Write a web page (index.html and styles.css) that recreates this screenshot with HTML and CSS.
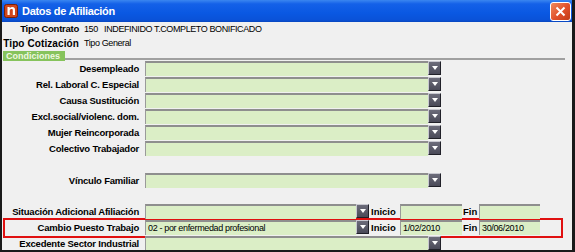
FILE: index.html
```html
<!DOCTYPE html>
<html lang="es">
<head>
<meta charset="utf-8">
<link rel="stylesheet" href="styles.css">
</head>
<body>
<div class="window">
  <div class="titlebar">
    <svg class="appicon" width="14" height="14" viewBox="0 0 14 14"><rect x="0.5" y="0.5" width="13" height="13" rx="2" fill="#d0461c" stroke="#7a2008"/><path d="M3.5 3h2.2v1.2C6.4 3.4 7.3 3 8.4 3c1.7 0 2.6 1 2.6 2.8V11H8.8V6.3c0-.9-.4-1.4-1.2-1.4-.9 0-1.9.6-1.9 1.8V11H3.5z" fill="#fff"/></svg>
    <span class="title">Datos de Afiliación</span>
    <span class="close"><svg width="11" height="11" viewBox="0 0 11 11"><path d="M1.5 1.5l8 8M9.5 1.5l-8 8" stroke="#fff" stroke-width="2"/></svg></span>
  </div>
  <div class="content">
    <div class="info first"><span class="ilabel">Tipo Contrato</span><span class="ivalue">150&nbsp;&nbsp; INDEFINIDO T.COMPLETO BONIFICADO</span></div>
    <div class="info second"><span class="ilabel wide-label">Tipo Cotización</span><span class="ivalue">Tipo General</span></div>
    <div class="tabrow"><span class="tab">Condiciones</span><span class="tabline"></span></div>

    <div class="row"><span class="label">Desempleado</span><span class="field wide"></span><span class="btn"></span></div>
    <div class="row"><span class="label">Rel. Laboral C. Especial</span><span class="field wide"></span><span class="btn"></span></div>
    <div class="row"><span class="label">Causa Sustitución</span><span class="field wide"></span><span class="btn"></span></div>
    <div class="row"><span class="label">Excl.social/violenc. dom.</span><span class="field wide"></span><span class="btn"></span></div>
    <div class="row"><span class="label">Mujer Reincorporada</span><span class="field wide"></span><span class="btn"></span></div>
    <div class="row"><span class="label">Colectivo Trabajador</span><span class="field wide"></span><span class="btn"></span></div>

    <div class="row gap-vinculo"><span class="label">Vínculo Familiar</span><span class="field wide"></span><span class="btn"></span></div>

    <div class="row gap-sit"><span class="label">Situación Adicional Afiliación</span><span class="field mid"></span><span class="btn"></span><span class="slabel ini">Inicio</span><span class="field date1"></span><span class="slabel fin">Fin</span><span class="field date2"></span></div>
    <div class="highlight">
      <div class="row"><span class="label">Cambio Puesto Trabajo</span><span class="field mid">02 - por enfermedad profesional</span><span class="btn"></span><span class="slabel ini">Inicio</span><span class="field date1">1/02/2010</span><span class="slabel fin">Fin</span><span class="field date2">30/06/2010</span></div>
    </div>
    <div class="row"><span class="label">Excedente Sector Industrial</span><span class="field wide"></span><span class="btn"></span></div>
  </div>
</div>
</body>
</html>
```
FILE: styles.css
```css
html, body {
  margin: 0;
  padding: 0;
  background: #ffffff;
}
.window {
  width: 575px;
  height: 252px;
  box-sizing: border-box;
  font-family: "Liberation Sans", Arial, sans-serif;
  font-size: 10px;
  color: #000;
  background: #f0f0f0;
  border-left: 2px solid #1a1a1a;
  border-right: 3px solid #1a1a1a;
  border-bottom: 2px solid #1a1a1a;
  overflow: hidden;
}
.titlebar {
  height: 22px;
  margin: 0 -3px 0 -2px;
  display: flex;
  align-items: center;
  background: linear-gradient(#3a86f0 0, #1461e8 18%, #0a58e2 60%, #0a52d8 90%, #0846bf 100%);
  padding-left: 4px;
}
.appicon { flex: none; }
.title {
  color: #fff;
  font-family: "Liberation Sans", Arial, sans-serif;
  font-weight: bold;
  font-size: 11px;
  letter-spacing: -0.3px;
  margin-left: 4px;
  flex: 1;
}
.close {
  width: 21px;
  height: 19px;
  margin-right: 4px;
  box-sizing: border-box;
  border: 1px solid #fff;
  border-radius: 3px;
  background: linear-gradient(135deg, #f08a5e, #e0502a 55%, #c23c18);
  display: flex;
  align-items: center;
  justify-content: center;
}
.info {
  display: flex;
  align-items: center;
}
.info.first { height: 13px; }
.info.second { height: 16px; }
.ilabel {
  width: 77px;
  flex: none;
  text-align: right;
  font-weight: bold;
  font-size: 9.5px;
  letter-spacing: -0.25px;
  white-space: nowrap;
}
.wide-label {
  font-size: 10px;
  letter-spacing: 0.1px;
}
.ivalue {
  margin-left: 5px;
  font-size: 9px;
  letter-spacing: -0.4px;
  white-space: nowrap;
}
.tabrow {
  height: 10px;
  display: flex;
  align-items: flex-end;
}
.tab {
  margin-left: 1px;
  width: 62px;
  height: 10px;
  background: #86c35c;
  color: #eef8e0;
  font-weight: bold;
  font-size: 9px;
  line-height: 10px;
  padding-left: 3px;
  box-sizing: border-box;
}
.tabline {
  width: 500px;
  height: 2px;
  background: #a0a0a0;
  margin-bottom: 1px;
}
.row {
  height: 16px;
  display: flex;
  align-items: flex-start;
}
.label {
  width: 137px;
  flex: none;
  text-align: right;
  font-weight: bold;
  font-size: 9.5px;
  letter-spacing: -0.2px;
  line-height: 15px;
  white-space: nowrap;
  margin-right: 6px;
}
.field {
  height: 15px;
  box-sizing: border-box;
  background: #dbeec6;
  border-top: 2px solid #8e8e8e;
  border-left: 1px solid #9a9a9a;
  flex: none;
  font-size: 9px;
  line-height: 12px;
  padding-left: 2px;
  white-space: nowrap;
  overflow: hidden;
  letter-spacing: -0.35px;
}
.wide { width: 283px; }
.mid { width: 211px; }
.date1 { width: 62px; }
.date2 { width: 61px; }
.btn {
  width: 13px;
  height: 14px;
  flex: none;
  box-sizing: border-box;
  border: 1px solid;
  border-color: #c8c8d0 #202028 #202028 #c8c8d0;
  background: linear-gradient(#6c6c7a, #4a4a58);
  position: relative;
}
.btn::after {
  content: "";
  position: absolute;
  left: 3px;
  top: 4px;
  width: 0;
  height: 0;
  border-left: 3px solid transparent;
  border-right: 3px solid transparent;
  border-top: 4px solid #fff;
}
.slabel {
  font-weight: bold;
  font-size: 9.5px;
  line-height: 15px;
  flex: none;
}
.ini { width: 29px; margin-left: 2px; }
.fin { width: 16px; margin-left: 1px; }
.gap-vinculo { margin-top: 16px; }
.gap-sit { margin-top: 15px; }
.highlight {
  margin: -2px 9px -2px 1px;
  border: 2px solid #e01010;
}
.highlight .row { margin-left: -3px; }
```
